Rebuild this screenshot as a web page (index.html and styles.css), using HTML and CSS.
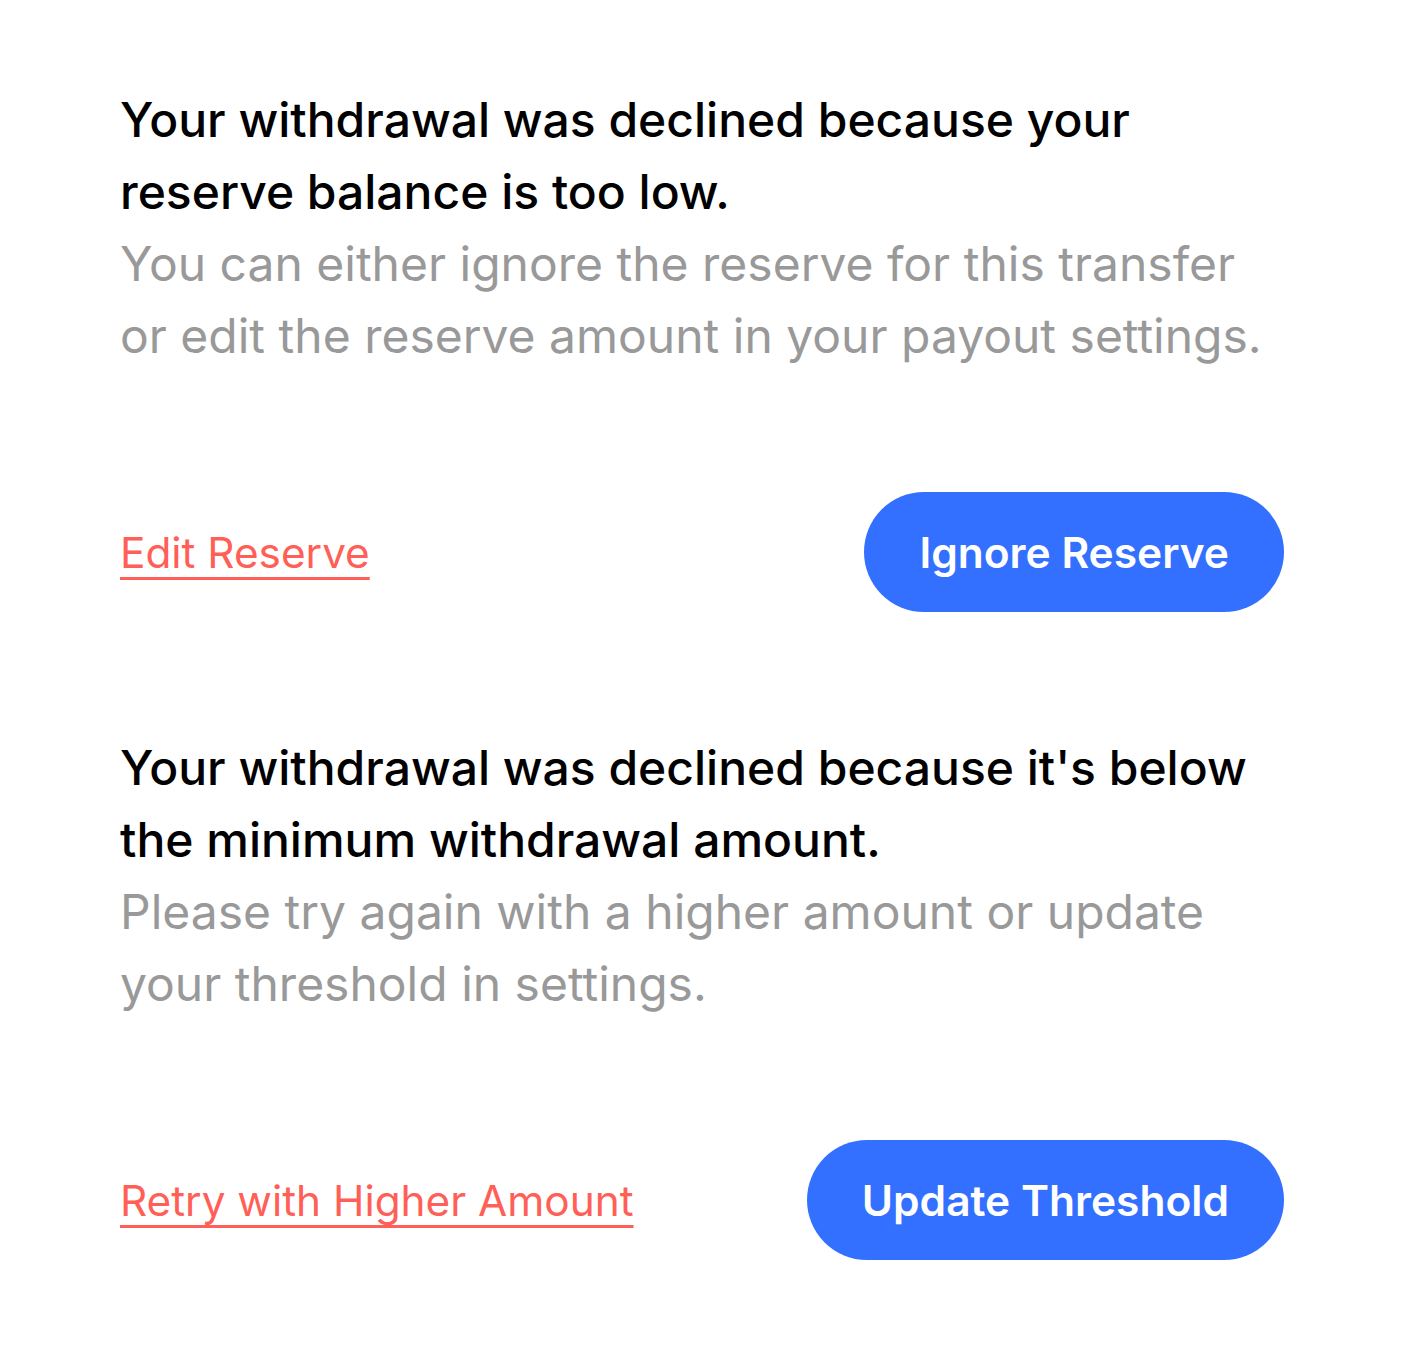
FILE: index.html
```html
<!DOCTYPE html>
<html lang="en">
<head>
  <meta charset="UTF-8">
  <title>Withdrawal declined</title>
  <link rel="stylesheet" href="styles.css">
</head>
<body>
  <div class="notice">
    <p class="notice-title">Your withdrawal was declined because your reserve balance is too low.</p>
    <p class="notice-text">You can either ignore the reserve for this transfer or edit the reserve amount in your payout settings.</p>
    <div class="actions">
      <a class="link" href="#">Edit Reserve</a>
      <button class="btn">Ignore Reserve</button>
    </div>
  </div>

  <div class="notice">
    <p class="notice-title">Your withdrawal was declined because it's below the minimum withdrawal amount.</p>
    <p class="notice-text">Please try again with a higher amount or update your threshold in settings.</p>
    <div class="actions">
      <a class="link" href="#">Retry with Higher Amount</a>
      <button class="btn">Update Threshold</button>
    </div>
  </div>
</body>
</html>
```

FILE: styles.css
```css
body {
  font-family: Inter, "Noto Sans", sans-serif;
  background-color: #fff;
  margin: 0;
  padding: 84px 120px 108px;
}

.notice {
  width: 1164px;
}

.notice + .notice {
  margin-top: 120px;
}

.notice-title {
  margin: 0;
  font-size: 48px;
  font-weight: 500;
  line-height: 72px;
  color: #000;
}

.notice-text {
  margin: 0;
  font-size: 48px;
  font-weight: 400;
  line-height: 72px;
  color: #999;
}

.actions {
  display: flex;
  align-items: center;
  justify-content: space-between;
  margin-top: 120px;
}

.link {
  font-size: 42.3px;
  color: #ff5f57;
  text-decoration: underline;
  text-decoration-thickness: 2.5px;
  text-decoration-skip-ink: none;
  text-underline-offset: 9px;
}

.btn {
  font-family: inherit;
  font-size: 42.5px;
  font-weight: 600;
  color: #fff;
  background-color: #3370ff;
  border: none;
  border-radius: 60px;
  height: 120px;
  padding: 0 55px;
  cursor: pointer;
}
```
